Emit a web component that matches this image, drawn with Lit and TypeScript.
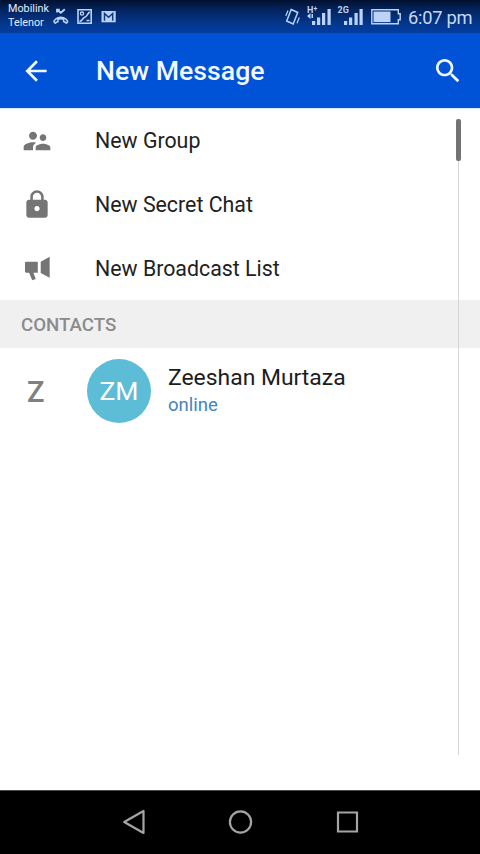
import { LitElement, html, svg, css } from "lit";
import { customElement, property } from "lit/decorators.js";

const people = svg`<path d="M16.5 12c1.38 0 2.49-1.12 2.49-2.5S17.88 7 16.5 7 14 8.12 14 9.5s1.12 2.5 2.5 2.5zM9 11c1.66 0 2.99-1.34 2.99-3S10.66 5 9 5 6 6.34 6 8s1.34 3 3 3zm7.5 3c-1.83 0-5.5.92-5.5 2.75V19h11v-2.25c0-1.83-3.67-2.75-5.5-2.75zM9 13c-2.33 0-7 1.17-7 3.5V19h7v-2.25c0-.85.33-2.34 2.37-3.47C10.5 13.1 9.66 13 9 13z"/>`;
const lock = svg`<path d="M18 8h-1V6c0-2.760-2.240-5-5-5S7 3.240 7 6v2H6c-1.100 0-2 .9-2 2v9.500c0 1.100.9 2 2 2h12c1.100 0 2-.9 2-2V10c0-1.100-.9-2-2-2zm-6 8.700c-1.100 0-2-.9-2-2s.9-2 2-2 2 .9 2 2-.9 2-2 2zm3.100-8.700H8.900V6c0-1.710 1.390-3.100 3.100-3.100s3.100 1.390 3.100 3.100v2z"/>`;
const megaphone = svg`<path d="M3.900 6.500h8.700v8.300H9.300l1.800 4.700-2.700 1-2.300-5.700H3.900c-.6 0-.9-.4-.9-.9V7.400c0-.5.300-.9.900-.9zM14.800 6.500l6.700-3.700v15.800l-6.700-3.600z"/>`;

@customElement("menu-row")
export class MenuRow extends LitElement {
  @property() label = "";
  @property({ attribute: false }) icon: unknown;
  static styles = css`
    :host { display: flex; align-items: center; height: 64px; padding-left: 21px; }
    svg { width: 32px; height: 32px; fill: #757575; flex: none; }
    span { margin-left: 42px; font-size: 21.350px; line-height: 28px; color: #212121; white-space: nowrap; }
  `;
  render() {
    return html`<svg viewBox="0 0 24 24">${this.icon}</svg><span>${this.label}</span>`;
  }
}

@customElement("app-root")
export class AppRoot extends LitElement {
  static styles = css`
    :host { display: flex; flex-direction: column; position: relative; width: 480px; height: 854px; overflow: hidden; background: #fff; font-family: Roboto, sans-serif; }
    svg { display: block; flex: none; }
    .status { height: 33px; box-sizing: border-box; display: flex; background: linear-gradient(#02102f 0, #03245f 10px, #043a94 26px, #033c9f 33px); color: #c6d8f5; padding-left: 8px; }
    .carriers { font-size: 10.800px; line-height: 14px; padding-top: 2px; width: 44px; color: #e4edfb; white-space: nowrap; }
    .clock { font-size: 18.300px; line-height: 22px; padding-top: 7px; margin-left: 7px; width: 64px; letter-spacing: -0.25px; white-space: nowrap; }
    .grow { flex: 1; }
    .bar { height: 75px; background: #0052d6; display: flex; align-items: center; color: #f2f8ff; box-sizing: border-box; padding: 0 16px 0 20px; }
    .bar svg { width: 32px; height: 32px; fill: #f0f8ff; }
    .bar h1 { margin: 0 0 0 44px; font-size: 26.700px; line-height: 34px; font-weight: 500; flex: 1; white-space: nowrap; }
    .edge { height: 1px; background: #dce9fb; }
    .content { flex: 1; display: flex; flex-direction: column; }
    .section { margin-top: -1px; height: 48px; line-height: 50px; background: #f0f0f0; padding-left: 21px; font-size: 18.700px; font-weight: 500; color: #8b8b8b; }
    .contact { height: 86px; display: flex; align-items: center; }
    .letter { width: 36px; padding-left: 27px; font-size: 29px; line-height: 36px; font-weight: 500; color: #808080; padding-top: 2px; }
    .avatar { width: 64px; height: 64px; border-radius: 50%; margin-left: 24px; background: #5dbcd6; color: #fff; font-size: 26.500px; line-height: 64px; text-align: center; }
    .who { margin-left: 17px; white-space: nowrap; }
    .name { font-size: 22.900px; line-height: 29px; color: #1c1c1c; }
    .online { font-size: 18.500px; line-height: 27px; padding-bottom: 1px; color: #4385bd; }
    .track { position: absolute; left: 458px; top: 119px; width: 1px; height: 636px; background: #d6d6d6; }
    .thumb { position: absolute; left: 456px; top: 119px; width: 5px; height: 42px; border-radius: 2px; background: #737373; }
    .nav { height: 64px; box-sizing: border-box; background: #000; border-top: 1px solid #484848; }
    .nav svg { fill: none; stroke: #a4a4a4; stroke-width: 2.200; }
  `;
  render() {
    return html`
      <div class="status">
        <div class="carriers">Mobilink<br />Telenor</div>
        <svg width="70" height="33" viewBox="52 0 70 33" fill="none" stroke="#bdd3f5" stroke-width="1.800">
          <path d="M57 9.800l3.800 3 4-3.500M57 12.500V9.700h2.800" />
          <path d="M54.200 22.300c-.8-2 2.600-5 6.600-5s7.400 3 6.600 5l-1 .7-2.800-1.500v-2.200c-1.700-.6-3.900-.6-5.600 0v2.200L55.200 23z" stroke-width="1.500" />
          <path d="M78 9.700h13.200v13.600H78zM79.500 21.500c3-.5 3.200-3.500 5.200-4.200 2.500-.8 2.300-3.300 5-5.300M86.500 20.500h3" stroke-width="1.600" />
          <circle cx="82" cy="13.600" r="1.600" stroke-width="1.300" />
          <path d="M101.500 11h14.200v11.300h-14.200z" fill="#bdd3f5" stroke="none" />
          <path d="M104.500 20.800v-7.300l4.100 3.700 4.100-3.700v7.300" stroke="#0c3b88" stroke-width="1.500" />
        </svg>
        <div class="grow"></div>
        <svg width="120" height="33" viewBox="281 0 120 33" fill="#bdd3f5">
          <g fill="none" stroke="#bdd3f5" stroke-width="1.500">
            <path d="M291.200 9.500l6.500 3-4.500 11.500-6.500-3z" />
            <path d="M288 10.500l-2.200 5.500M299.300 17.500l-2.300 5.800" stroke-width="1.200" />
          </g>
          <g font-family="Roboto, sans-serif" font-size="9" font-weight="700">
            <text x="307" y="12.500">H</text>
            <text x="313.500" y="10.500" font-size="7">+</text>
            <text x="337.500" y="12.500">2G</text>
          </g>
          <path d="M307 16l3.500-3v6zM311.500 14h1.500v4h-1.500zM312 21h3.200v4H312zM317 17.500h3.200V25H317zM322 13h3.200v12H322zM327.500 9h3.200v16h-3.200z" />
          <path d="M344 21h3.200v4H344zM349 17.500h3.200V25H349zM354.500 13h3.200v12h-3.200zM359.500 9h3.200v16h-3.200z" />
          <path d="M371.800 9.800h26.500v4h1.900v6h-1.900v4h-26.500z" fill="none" stroke="#bdd3f5" stroke-width="1.400" />
          <path d="M373.500 11.500h17v10.600h-17z" />
        </svg>
        <div class="clock">6:07 pm</div>
        <svg width="8" height="33"></svg>
      </div>
      <div class="bar">
        <svg viewBox="0 0 24 24"><path d="M20 11H7.830l5.590-5.590L12 4l-8 8 8 8 1.410-1.410L7.830 13H20v-2z" /></svg>
        <h1>New Message</h1>
        <svg viewBox="0 0 24 24"><path d="M15.500 14h-.79l-.28-.27C15.410 12.590 16 11.110 16 9.500 16 5.910 13.090 3 9.500 3S3 5.910 3 9.500 5.910 16 9.500 16c1.610 0 3.090-.59 4.230-1.570l.27.28v.79l5 4.990L20.490 19l-4.990-5zm-6 0C7.010 14 5 11.990 5 9.500S7.010 5 9.500 5 14 7.010 14 9.500 11.990 14 9.500 14z" /></svg>
      </div>
      <div class="edge"></div>
      <div class="content">
        <menu-row label="New Group" .icon=${people}></menu-row>
        <menu-row label="New Secret Chat" .icon=${lock}></menu-row>
        <menu-row label="New Broadcast List" .icon=${megaphone}></menu-row>
        <div class="section">CONTACTS</div>
        <div class="contact">
          <div class="letter">Z</div>
          <div class="avatar">ZM</div>
          <div class="who">
            <div class="name">Zeeshan Murtaza</div>
            <div class="online">online</div>
          </div>
        </div>
      </div>
      <div class="nav">
        <svg width="480" height="63" viewBox="0 791 480 63">
          <path d="M143.500 811v22l-19.300-11z" stroke-linejoin="round" />
          <circle cx="240.500" cy="822" r="10.600" />
          <path d="M338 812.500h19v19h-19z" />
        </svg>
      </div>
      <div class="track"></div>
      <div class="thumb"></div>
    `;
  }
}
